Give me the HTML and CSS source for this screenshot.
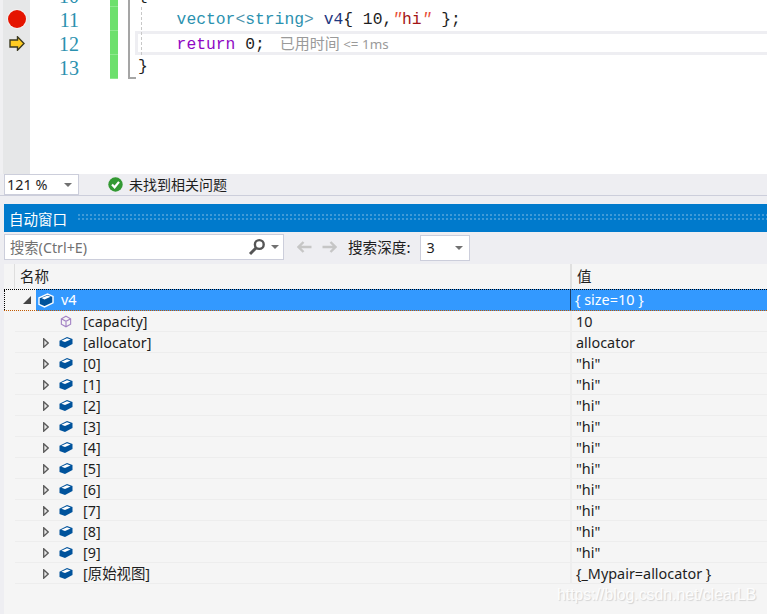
FILE: index.html
```html
<!DOCTYPE html>
<html lang="zh">
<head>
<meta charset="utf-8">
<title>自动窗口</title>
<link rel="stylesheet" href="styles.css">
</head>
<body>
<svg class="sprite" width="0" height="0" aria-hidden="true">
  <defs>
    <symbol id="cube" viewBox="0 0 14 12">
      <path d="M0.5 4.2 L8 0.5 L13.5 2.6 V7.6 L6 11.5 L0.5 9.4 Z" fill="#00539c"/>
      <path d="M2.4 4.2 L8 1.7 L11.6 3 L6 5.6 Z" fill="#fff"/>
    </symbol>
    <symbol id="arrow" viewBox="0 0 6 10">
      <path d="M0.7 0.8 L5.2 5 L0.7 9.2 Z" fill="#e8e8e8" stroke="#5a5a5a" stroke-width="1.3"/>
    </symbol>
  </defs>
</svg>

<section class="editor">
  <div class="gutter">
    <div class="gutter-cell gutter-top"></div>
    <div class="gutter-cell"><span class="breakpoint"></span></div>
    <div class="gutter-cell">
      <svg class="current" width="16" height="15" viewBox="0 0 16 15"><path d="M1 4 H8.5 V0.8 L15 7.5 L8.5 14.2 V11 H1 Z" fill="#ffcc22" stroke="#3c3a20" stroke-width="1.4"/></svg>
    </div>
    <div class="gutter-cell"></div>
  </div>
  <div class="numbers">
    <div class="num">10</div>
    <div class="num">11</div>
    <div class="num">12</div>
    <div class="num">13</div>
  </div>
  <div class="changes">
    <div class="change"></div>
    <div class="change"></div>
    <div class="change"></div>
    <div class="change"></div>
  </div>
  <div class="outline"></div>
  <div class="code">
    <span class="guide"></span>
    <div class="line line-down"><span class="plain">{</span></div>
    <div class="line line-down"><span class="indent"></span><span class="type">vector</span><span class="angle">&lt;</span><span class="type">string</span><span class="angle">&gt;</span> <span class="var">v4</span><span class="plain">{ 10,</span><span class="str"><i class="quote">"</i>hi<i class="quote">"</i></span><span class="plain"> };</span></div>
    <div class="line line-current"><span class="indent"></span><span class="kw">return</span> <span class="plain">0;</span><span class="perf">已用时间 <small class="perf-ms">&lt;= 1ms</small></span></div>
    <div class="line"><span class="plain">}</span></div>
  </div>
</section>

<section class="statusbar">
  <div class="zoom-box"><span>121 %</span><span class="caret"></span></div>
  <svg class="ok" width="15" height="15" viewBox="0 0 15 15"><circle cx="7.5" cy="7.5" r="7.2" fill="#339933"/><path d="M4 7.6 L6.6 10.3 L11 4.9" fill="none" stroke="#fff" stroke-width="2.2"/></svg>
  <span class="ok-text">未找到相关问题</span>
</section>

<section class="panel">
  <header class="titlebar">
    <span class="title">自动窗口</span>
    <span class="grip"></span>
  </header>
  <div class="toolbar">
    <div class="search">
      <span class="placeholder">搜索(Ctrl+E)</span>
      <svg class="lens" width="18" height="18" viewBox="0 0 18 18"><circle cx="11.3" cy="6.5" r="4.4" fill="none" stroke="#555" stroke-width="2.4"/><path d="M8 10 L2 16" stroke="#555" stroke-width="3"/></svg>
      <span class="caret"></span>
    </div>
    <svg class="nav-back" width="15" height="12" viewBox="0 0 15 12"><path d="M6.5 1 L1.5 6 L6.5 11 M1.5 6 H14.5" fill="none" stroke="#c6c6c6" stroke-width="2.4"/></svg>
    <svg class="nav-fwd" width="15" height="12" viewBox="0 0 15 12"><path d="M8.5 1 L13.5 6 L8.5 11 M13.5 6 H0.5" fill="none" stroke="#c6c6c6" stroke-width="2.4"/></svg>
    <span class="depth-label">搜索深度:</span>
    <div class="depth-box"><span>3</span><span class="caret"></span></div>
  </div>
  <div class="grid-head">
    <div class="head-name">名称</div>
    <div class="head-val">值</div>
  </div>
  <div class="tree">
    <div class="row row-selected">
      <div class="name">
        <svg class="tri" width="8" height="8" viewBox="0 0 8 8"><path d="M0 8 H8 V0 Z" fill="#444"/></svg>
        <svg class="root-cube" width="16" height="15" viewBox="0 0 16 15"><path d="M1 4.8 L9.5 1 L15 3.4 V9.8 L6.5 14 L1 11.4 Z" fill="#00539c" stroke="#fff" stroke-width="1.4"/><path d="M3.5 5 L9.5 2.4 L12.6 3.7 L6.5 6.6 Z" fill="#fff"/></svg>
        <span class="root-label">v4</span>
      </div>
      <div class="val">{ size=10 }</div>
    </div>
    <div class="row">
      <div class="name">
        <span class="exp"></span>
        <svg class="icon" width="14" height="14" viewBox="0 0 14 14"><path d="M7 1.3 L12 4 V10 L7 12.7 L2 10 V4 Z M2 4 L7 6.8 L12 4 M7 6.8 V12.7" fill="none" stroke="#a382c4" stroke-width="1.2"/></svg>
        <span>[capacity]</span>
      </div>
      <div class="val">10</div>
    </div>
    <div class="row"><div class="name"><svg class="exp"><use href="#arrow"/></svg><svg class="icon"><use href="#cube"/></svg><span>[allocator]</span></div><div class="val">allocator</div></div>
    <div class="row"><div class="name"><svg class="exp"><use href="#arrow"/></svg><svg class="icon"><use href="#cube"/></svg><span>[0]</span></div><div class="val">"hi"</div></div>
    <div class="row"><div class="name"><svg class="exp"><use href="#arrow"/></svg><svg class="icon"><use href="#cube"/></svg><span>[1]</span></div><div class="val">"hi"</div></div>
    <div class="row"><div class="name"><svg class="exp"><use href="#arrow"/></svg><svg class="icon"><use href="#cube"/></svg><span>[2]</span></div><div class="val">"hi"</div></div>
    <div class="row"><div class="name"><svg class="exp"><use href="#arrow"/></svg><svg class="icon"><use href="#cube"/></svg><span>[3]</span></div><div class="val">"hi"</div></div>
    <div class="row"><div class="name"><svg class="exp"><use href="#arrow"/></svg><svg class="icon"><use href="#cube"/></svg><span>[4]</span></div><div class="val">"hi"</div></div>
    <div class="row"><div class="name"><svg class="exp"><use href="#arrow"/></svg><svg class="icon"><use href="#cube"/></svg><span>[5]</span></div><div class="val">"hi"</div></div>
    <div class="row"><div class="name"><svg class="exp"><use href="#arrow"/></svg><svg class="icon"><use href="#cube"/></svg><span>[6]</span></div><div class="val">"hi"</div></div>
    <div class="row"><div class="name"><svg class="exp"><use href="#arrow"/></svg><svg class="icon"><use href="#cube"/></svg><span>[7]</span></div><div class="val">"hi"</div></div>
    <div class="row"><div class="name"><svg class="exp"><use href="#arrow"/></svg><svg class="icon"><use href="#cube"/></svg><span>[8]</span></div><div class="val">"hi"</div></div>
    <div class="row"><div class="name"><svg class="exp"><use href="#arrow"/></svg><svg class="icon"><use href="#cube"/></svg><span>[9]</span></div><div class="val">"hi"</div></div>
    <div class="row"><div class="name"><svg class="exp"><use href="#arrow"/></svg><svg class="icon"><use href="#cube"/></svg><span>[原始视图]</span></div><div class="val">{_Mypair=allocator }</div></div>
  </div>
</section>
<div class="watermark">https://blog.csdn.net/clearLB</div>
</body>
</html>
```

FILE: styles.css
```css
* { box-sizing: border-box; }
html, body { margin: 0; height: 100%; }
body {
  position: relative;
  width: 767px;
  height: 614px;
  overflow: hidden;
  background: #eeeef2;
  font-family: "Noto Sans", "Noto Sans CJK SC", sans-serif;
  font-size: 14.4px;
  color: #1e1e1e;
}
.sprite { position: absolute; }

/* editor */
.editor {
  display: flex;
  height: 174px;
  background: #fff;
  overflow: hidden;
}
.gutter {
  flex: none;
  width: 30px;
  height: 174px;
  background: #e6e7e8;
  border-left: 3px solid #f0f0f2;
}
.gutter-cell, .num, .change, .line { height: 24px; }
.gutter-cell { display: flex; align-items: center; justify-content: center; }
.gutter-top { height: 7px; }
.breakpoint {
  width: 18px; height: 18px;
  border-radius: 50%;
  background: #e51400;
  box-shadow: 0 0 0 1px #f6f0f0;
}
.current { display: block; }
.numbers { flex: none; width: 80px; height: 96px; margin-top: -17px; padding-right: 31px; text-align: right; }
.num {
  font-family: "Liberation Serif", serif;
  font-size: 20px;
  line-height: 26px;
  color: #2b91af;
}
.changes { flex: none; width: 8px; height: 96px; margin-top: -17px; background: #6de06d; }
.change { border-bottom: 1px solid #8fe88f; }
.outline {
  flex: none;
  width: 8px;
  height: 79px;
  margin-left: 10px;
  margin-right: 2px;
  border-left: 2px solid #a5a5a5;
  border-bottom: 2px solid #a5a5a5;
}
.code {
  position: relative;
  flex: 1;
  height: 200px;
  margin-top: -17px;
  font-family: "Liberation Mono", monospace;
  font-size: 16.33px;
  line-height: 24px;
}
.guide {
  position: absolute;
  left: 3px;
  top: 24px;
  height: 48px;
  border-left: 1px dashed #c8c8c8;
}
.line { white-space: pre; }
.line-down { line-height: 26px; }
.indent { display: inline-block; width: 38.6px; }
.line-current {
  margin-left: -3px;
  border: 3px solid #eeeef2;
  border-right: 0;
  line-height: 18px;
}
.type { color: #2b91af; }
.angle { color: #4f94ac; }
.var { color: #1f377f; }
.plain { color: #1e1e1e; }
.str { color: #a31515; }
.quote { color: #e8503a; }
.kw { color: #8f08c4; }
.perf {
  margin-left: 15px;
  font-family: "Noto Sans CJK SC", sans-serif;
  font-size: 15px;
  color: #9a9a9a;
}
.perf-ms { font-family: "Noto Sans", sans-serif; font-size: 13.4px; }

/* zoom bar */
.statusbar {
  display: flex;
  align-items: center;
  height: 22px;
  padding-left: 4px;
  background: #eeeef2;
  border-bottom: 1px solid #cccedb;
}
.zoom-box {
  display: flex;
  align-items: center;
  justify-content: space-between;
  width: 75px;
  height: 21px;
  padding: 0 6px 0 2px;
  background: #fff;
  border: 1px solid #cccedb;
}
.caret {
  width: 0; height: 0;
  border-left: 4px solid transparent;
  border-right: 4px solid transparent;
  border-top: 4px solid #717171;
}
.ok { margin-left: 29px; }
.ok-text { margin-left: 6px; margin-bottom: 2px; font-size: 14px; font-family: "Noto Sans CJK SC", sans-serif; }

/* panel */
.panel { margin-top: 8px; margin-left: 4px; }
.titlebar {
  display: flex;
  align-items: center;
  height: 28px;
  background: #007acc;
  color: #fff;
}
.title { margin-left: 5px; font-size: 14.5px; font-family: "Noto Sans CJK SC", sans-serif; }
.grip {
  flex: 1;
  height: 8px;
  margin-left: 11px;
  background-image: radial-gradient(circle at 1px 1px, #3f9ad8 1px, transparent 1.2px);
  background-size: 4px 4px;
}
.toolbar {
  display: flex;
  align-items: center;
  height: 32px;
  padding-bottom: 4px;
  padding-top: 1px;
}
.search {
  display: flex;
  align-items: center;
  width: 280px;
  height: 26px;
  padding: 0 4px 0 5px;
  background: #fff;
  border: 1px solid #cccedb;
}
.placeholder { flex: 1; color: #717171; font-size: 14.3px; }
.lens { margin-right: 5px; }
.nav-back { margin-left: 13px; }
.nav-fwd { margin-left: 10px; }
.depth-label { margin-left: 11px; font-size: 14.6px; font-family: "Noto Sans CJK SC", sans-serif; }
.depth-box {
  display: flex;
  align-items: center;
  justify-content: space-between;
  width: 50px;
  height: 26px;
  margin-left: 10px;
  margin-top: 2px;
  padding: 0 6px 0 5px;
  background: #fff;
  border: 1px solid #cccedb;
}

/* grid */
.grid-head {
  display: grid;
  grid-template-columns: 556px 1fr;
  height: 25px;
  padding-left: 10px;
  background: #f5f5f5;
  font-size: 14.5px;
  line-height: 25px;
}
.head-name { padding-left: 5px; border-left: 1px solid #dedede; }
.head-val { padding-left: 5px; border-left: 2px solid #e0e0e0; }
.tree { background: #f5f5f5; height: 325px; padding-left: 11px; }
.row {
  display: grid;
  grid-template-columns: 555px 1fr;
  height: 21px;
  border-bottom: 1px solid #ededed;
  line-height: 21px;
}
.name { display: flex; align-items: center; padding-left: 28px; white-space: nowrap; }
.val { padding-left: 4px; border-left: 2px solid #eeeeee; white-space: nowrap; }
.exp { width: 6px; height: 10px; flex: none; }
.icon { width: 14px; height: 13px; margin-left: 10px; margin-right: 10px; flex: none; }
.row-selected {
  margin-left: -11px;
  grid-template-columns: 566px 1fr;
  height: 22px;
  line-height: 20px;
  border-top: 1px dotted #000;
  border-bottom: 1px dotted #c25a00;
  background: linear-gradient(90deg, #f5f5f5 32px, #3399ff 32px);
  color: #fff;
}
.row-selected .name { padding-left: 18px; border-left: 1px dotted #000; }
.row-selected .val { border-left: 1px solid #1c3f66; padding-left: 4px; }
.tri { flex: none; }
.root-cube { margin-left: 7px; flex: none; }
.root-label { margin-left: 7px; }

.watermark {
  position: absolute;
  left: 557px;
  top: 586px;
  font-family: "Liberation Sans", sans-serif;
  font-size: 15.8px;
  color: rgba(255,255,255,0.9);
  text-shadow: 1px 1px 1px rgba(0,0,0,0.14);
}
```
